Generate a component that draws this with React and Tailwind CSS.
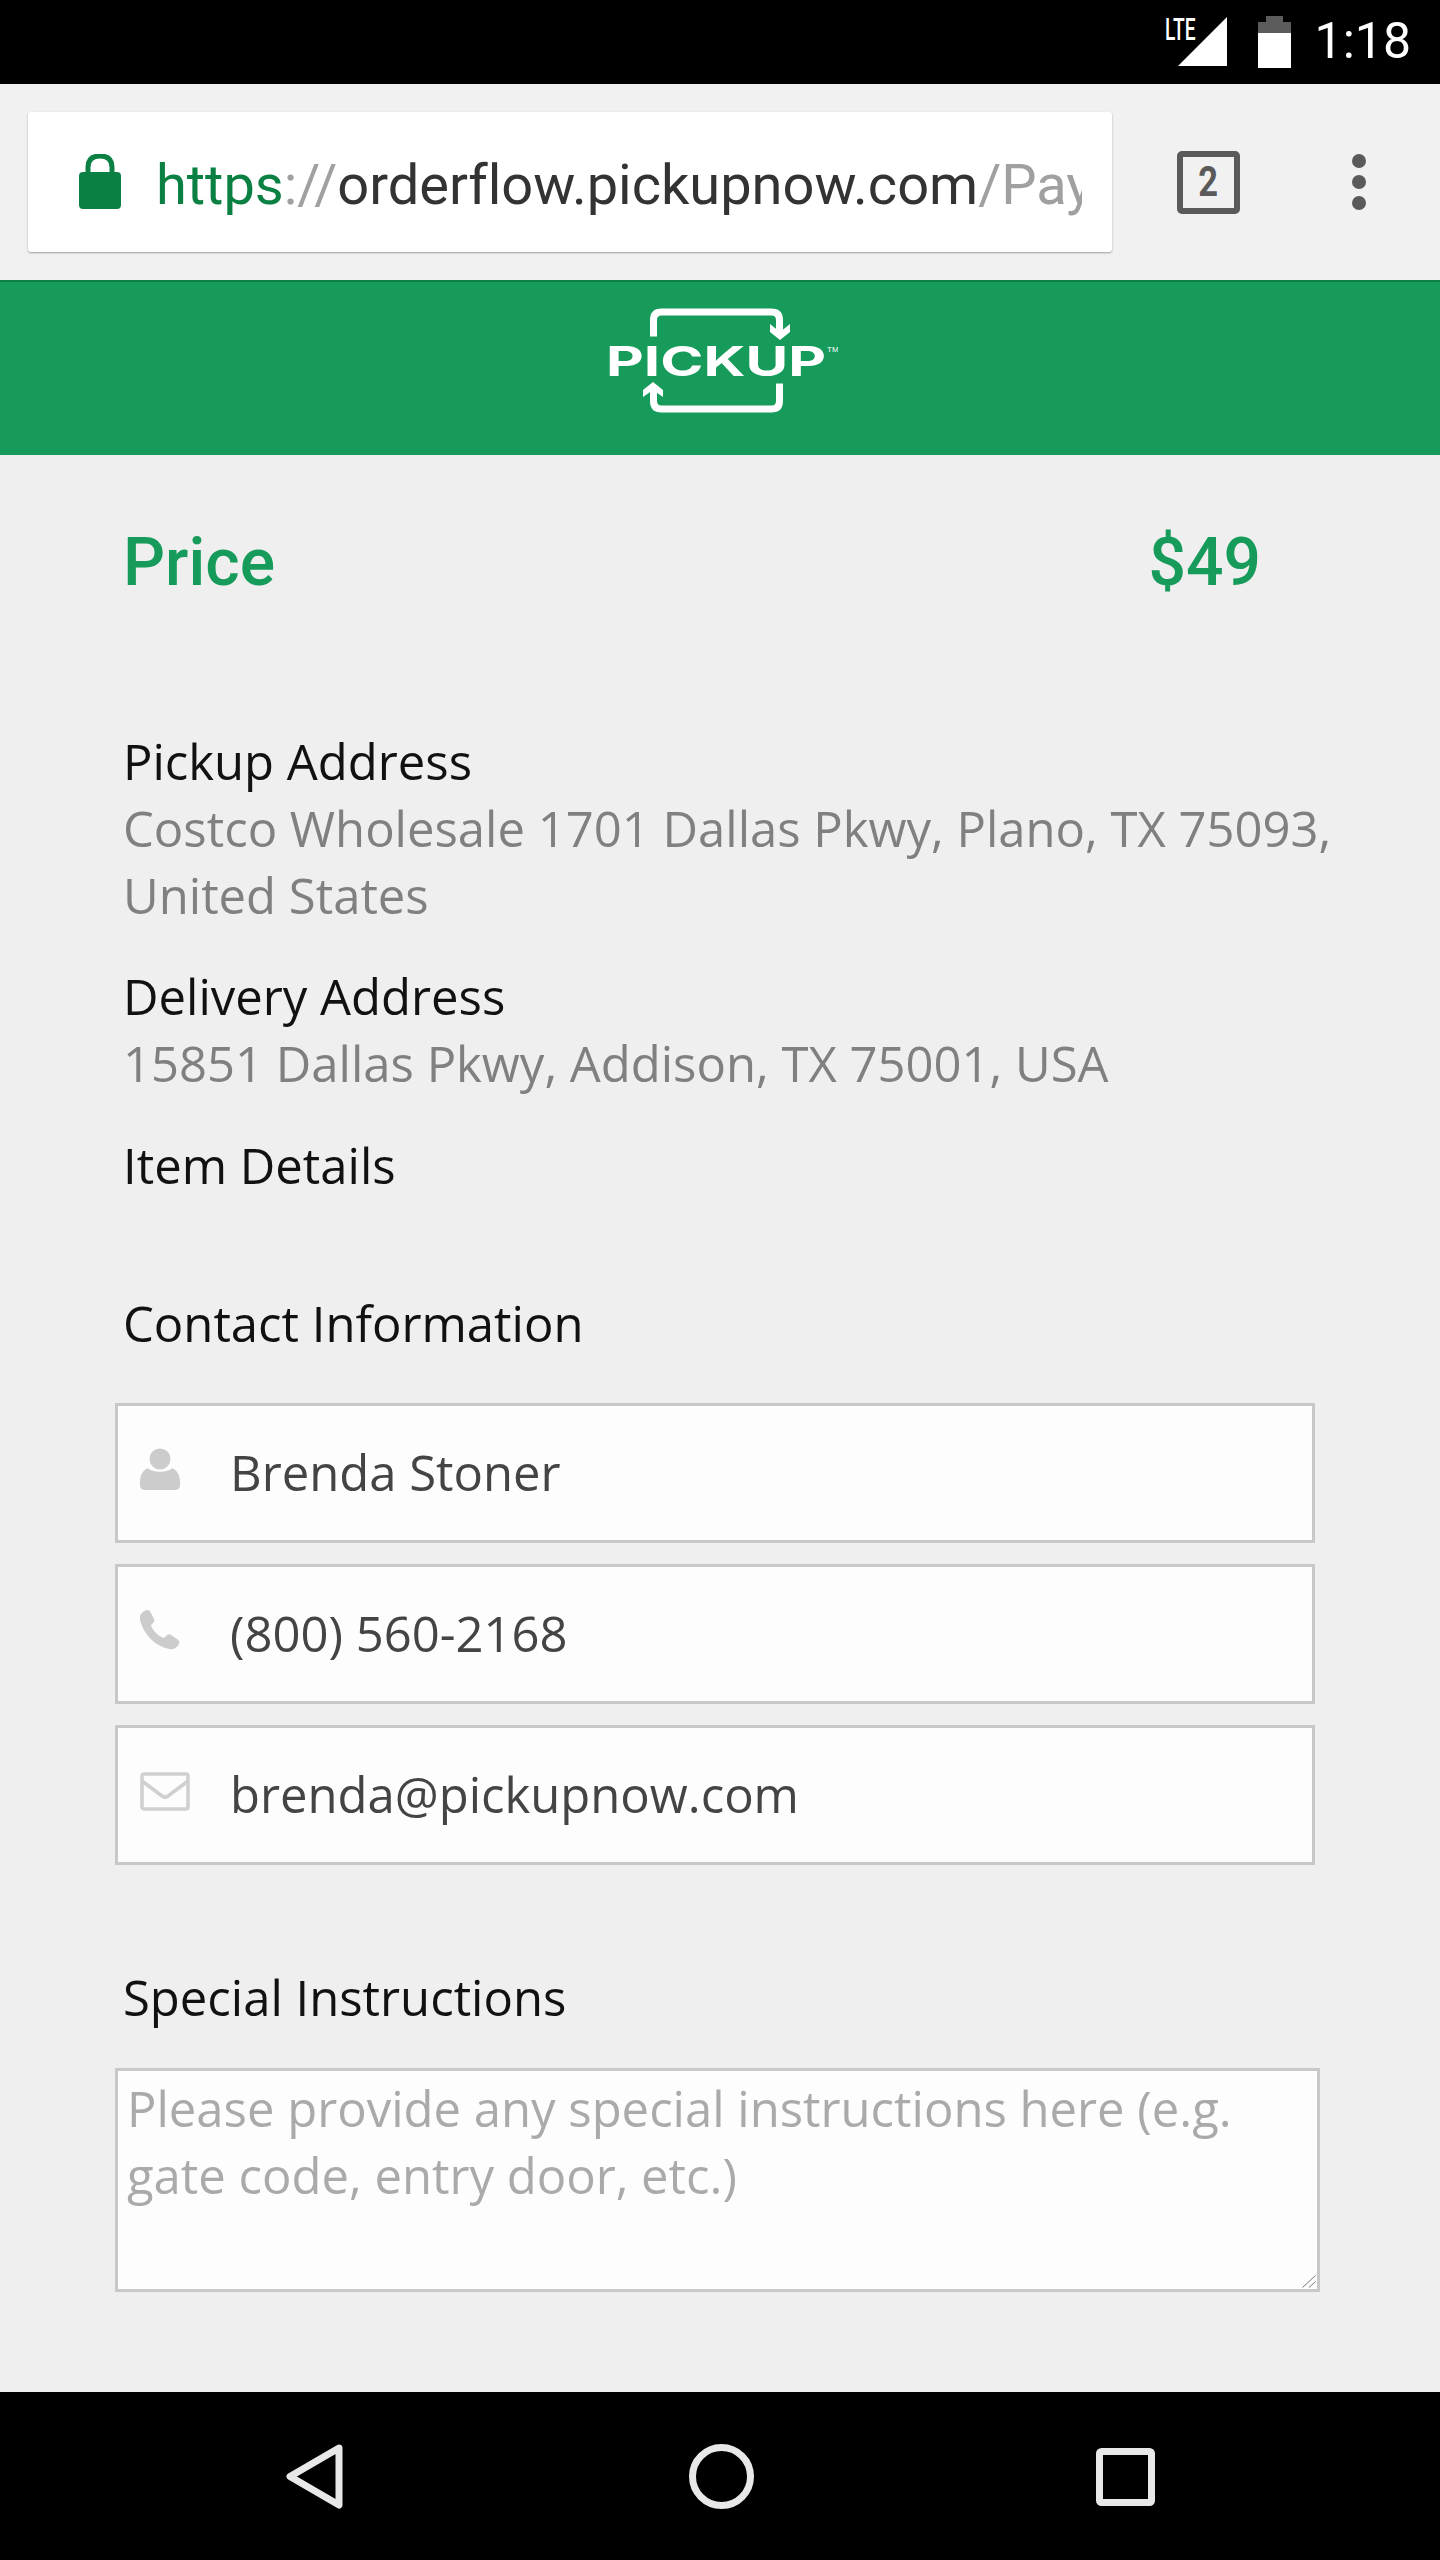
import React from "react";

const Label = ({ children, className = "" }) => (
  <div className={`text-[49px] leading-[67px] text-[#111] ${className}`}>{children}</div>
);
const Value = ({ children }) => (
  <div className="text-[49px] leading-[67px] text-[#808080] whitespace-nowrap">{children}</div>
);

const UserIcon = () => (
  <svg width="40" height="43" viewBox="0 0 40 43" fill="#cccccc">
    <circle cx="20" cy="11" r="10.5" />
    <path d="M8 20 C12 25 28 25 32 20 C37 22 40 27 40 34 L40 37 C40 40 38 42 35 42 L5 42 C2 42 0 40 0 37 L0 34 C0 27 3 22 8 20 Z" />
  </svg>
);
const PhoneIcon = () => (
  <svg width="40" height="40" viewBox="0 0 40 40" fill="#cccccc">
    <path d="M7 0 C9 0 10 1 11 3 L14 9 C15 11 14 12 13 13 L11 15 C12 20 19 27 24 28 L27 25 C28 24 30 24 31 25 L37 29 C39 30 40 32 39 34 C37 38 33 40 29 39 C15 36 4 25 0 10 C-1 6 2 1 7 0 Z" />
  </svg>
);
const MailIcon = () => (
  <svg width="50" height="39" viewBox="0 0 50 39" fill="none" stroke="#d0d0d0" strokeWidth="3.5">
    <rect x="2" y="2" width="46" height="35" rx="2" />
    <path d="M2 9 L22 24 C24 25.5 26 25.5 28 24 L48 9" />
  </svg>
);

const Field = ({ icon, value }) => (
  <div className="flex items-center h-[140px] w-[1200px] border-[3px] border-[#c8c8c8] bg-[#fdfdfd]">
    <div className="w-[112px] pl-[22px] shrink-0 -mt-[8px]">{icon}</div>
    <input
      readOnly
      value={value}
      className="flex-1 bg-transparent outline-none text-[49px] text-[#444444] font-['Open_Sans',sans-serif]"
    />
  </div>
);

const Logo = () => (
  <svg width="232" height="120" viewBox="0 0 232 120" fill="none">
    <g stroke="#ffffff" strokeWidth="7">
      <path d="M47.5 31.5 V15 Q47.5 7 55.5 7 H165.5 Q173.5 7 173.5 15 V28" />
      <path d="M173.5 78.5 V96 Q173.5 104 165.5 104 H55.5 Q47.5 104 47.5 96 V84" />
    </g>
    <path d="M164 19 L174 27 L184 19 L184 27 L174 35 L164 27 Z" fill="#ffffff" />
    <path d="M47 77 L57 85 L57 92 L47 85 L37 92 L37 85 Z" fill="#ffffff" />
    <text
      x="0"
      y="70.5"
      fontFamily="Inter, sans-serif"
      fontWeight="700"
      fontSize="41"
      fill="#ffffff"
      textLength="220"
      lengthAdjust="spacingAndGlyphs"
    >
      PICKUP
    </text>
    <text x="221" y="47" fontFamily="'Liberation Sans', sans-serif" fontSize="8" fill="#ffffff">
      TM
    </text>
  </svg>
);

export default function App() {
  return (
    <div className="w-[1440px] h-[2560px] flex flex-col overflow-hidden bg-[#efefef] font-['Open_Sans',sans-serif]">
      {/* status bar */}
      <div className="relative h-[84px] shrink-0 bg-black flex items-start justify-end pr-[29px]">
        <div className="relative w-[64px] h-[84px] mr-[19px]">
          <svg width="50" height="50" viewBox="0 0 50 50" className="absolute left-[3px] top-[17px]">
            <path d="M49 0 V49 H0 Z" fill="#ffffff" />
          </svg>
          <span className="absolute -left-[10px] top-[13px] text-[32px] leading-[32px] text-white font-['Roboto',sans-serif] font-medium scale-x-[0.6] origin-left">
            LTE
          </span>
        </div>
        <svg width="33" height="52" viewBox="0 0 33 52" className="mt-[16px] mr-[24px]">
          <path d="M8 0 H25 V6 H33 V17 H0 V6 H8 Z" fill="#5c5c5c" />
          <rect x="0" y="17" width="33" height="35" fill="#ffffff" />
        </svg>
        <span className="text-[50px] leading-[84px] text-white font-['Roboto',sans-serif] -mt-[1px]">1:18</span>
      </div>

      {/* browser toolbar */}
      <div className="h-[196px] shrink-0 bg-[#f1f1f1] flex items-center pl-[28px]">
        <div className="w-[1084px] h-[140px] bg-white rounded-[3px] shadow-[0_1px_2px_rgba(0,0,0,0.35)] flex items-center pl-[51px] pr-[30px]">
          <svg width="42" height="55" viewBox="0 0 42 55" className="shrink-0 mr-[35px] -mt-[2px]">
            <path d="M9 22 V13 C9 5 14 2 21 2 C28 2 33 5 33 13 V22" fill="none" stroke="#0b8043" strokeWidth="5" />
            <rect x="0" y="18" width="42" height="37" rx="4" fill="#0b8043" />
          </svg>
          <div className="flex-1 overflow-hidden whitespace-nowrap text-[56px] leading-[70px] font-['Roboto',sans-serif] text-[#333333] mt-[6px] tracking-[-0.02px]">
            <span className="text-[#0b8043]">https</span>
            <span className="text-[#a0a0a0]">://</span>
            orderflow.pickupnow.com
            <span className="text-[#a0a0a0]">/Pay</span>
          </div>
        </div>
        <div className="ml-[65px] w-[63px] h-[63px] border-[6px] border-[#5a5a5a] rounded-[5px] flex items-center justify-center">
          <span className="text-[42px] leading-none font-bold text-[#5a5a5a] font-['Roboto',sans-serif] scale-x-[0.82]">2</span>
        </div>
        <div className="ml-[112px] flex flex-col gap-[7px]">
          <div className="w-[14px] h-[14px] rounded-full bg-[#5a5a5a]" />
          <div className="w-[14px] h-[14px] rounded-full bg-[#5a5a5a]" />
          <div className="w-[14px] h-[14px] rounded-full bg-[#5a5a5a]" />
        </div>
      </div>

      {/* green header */}
      <div className="h-[175px] shrink-0 bg-[#169b5b] border-t-[2px] border-[#0f7f49] flex items-center justify-center">
        <div className="-mt-[8px] translate-x-[2px]">
          <Logo />
        </div>
      </div>

      {/* content */}
      <div className="flex-1 min-h-0 pl-[123px]">
        <div className="flex justify-between w-[1138px] mt-[65px] h-[84px] items-center font-['Roboto',sans-serif] font-medium text-[66px] text-[#169b5b]">
          <span>Price</span>
          <span>$49</span>
        </div>
        <div className="mt-[124px]">
          <Label>Pickup Address</Label>
          <Value>Costco Wholesale 1701 Dallas Pkwy, Plano, TX 75093,</Value>
          <Value>United States</Value>
        </div>
        <div className="mt-[34px]">
          <Label>Delivery Address</Label>
          <Value>15851 Dallas Pkwy, Addison, TX 75001, USA</Value>
        </div>
        <Label className="mt-[35px]">Item Details</Label>
        <Label className="mt-[91px]">Contact Information</Label>
        <div className="-ml-[8px] mt-[46px] flex flex-col gap-[21px]">
          <Field icon={<UserIcon />} value="Brenda Stoner" />
          <Field icon={<PhoneIcon />} value="(800) 560-2168" />
          <Field icon={<MailIcon />} value="brenda@pickupnow.com" />
        </div>
        <Label className="mt-[99px]">Special Instructions</Label>
        <div className="relative -ml-[8px] mt-[37px] w-[1205px] h-[224px]">
          <textarea
            className="block w-full h-full resize-none border-[3px] border-[#c8c8c8] bg-[#fdfdfd] pl-[9px] pt-[4px] pr-[9px] text-[49px] leading-[67px] outline-none placeholder:text-[#aaaaaa] font-['Open_Sans',sans-serif]"
            placeholder="Please provide any special instructions here (e.g. gate code, entry door, etc.)"
          />
          <svg width="16" height="16" viewBox="0 0 16 16" className="absolute right-[3px] bottom-[3px]" fill="none" stroke="#777777" strokeWidth="1">
            <path d="M1.5 14.5 L14.5 2.5" />
            <path d="M8 14.5 L14.5 8.5" />
          </svg>
        </div>
      </div>

      {/* nav bar */}
      <div className="h-[168px] shrink-0 bg-black flex items-start justify-between pl-[286px] pr-[285px] pt-[52px]">
        <svg width="57" height="65" viewBox="0 0 57 65" fill="none">
          <path d="M53 4 L4 32.5 L53 61 Z" stroke="#e8e8e8" strokeWidth="7" strokeLinejoin="round" />
        </svg>
        <svg width="65" height="65" viewBox="0 0 65 65" fill="none" className="translate-x-[2px]">
          <circle cx="32.5" cy="32.5" r="29" stroke="#e8e8e8" strokeWidth="7" />
        </svg>
        <svg width="59" height="58" viewBox="0 0 59 58" fill="none" className="mt-[4px]">
          <rect x="3.5" y="3.5" width="52" height="51" rx="2" stroke="#e8e8e8" strokeWidth="7" />
        </svg>
      </div>
    </div>
  );
}
